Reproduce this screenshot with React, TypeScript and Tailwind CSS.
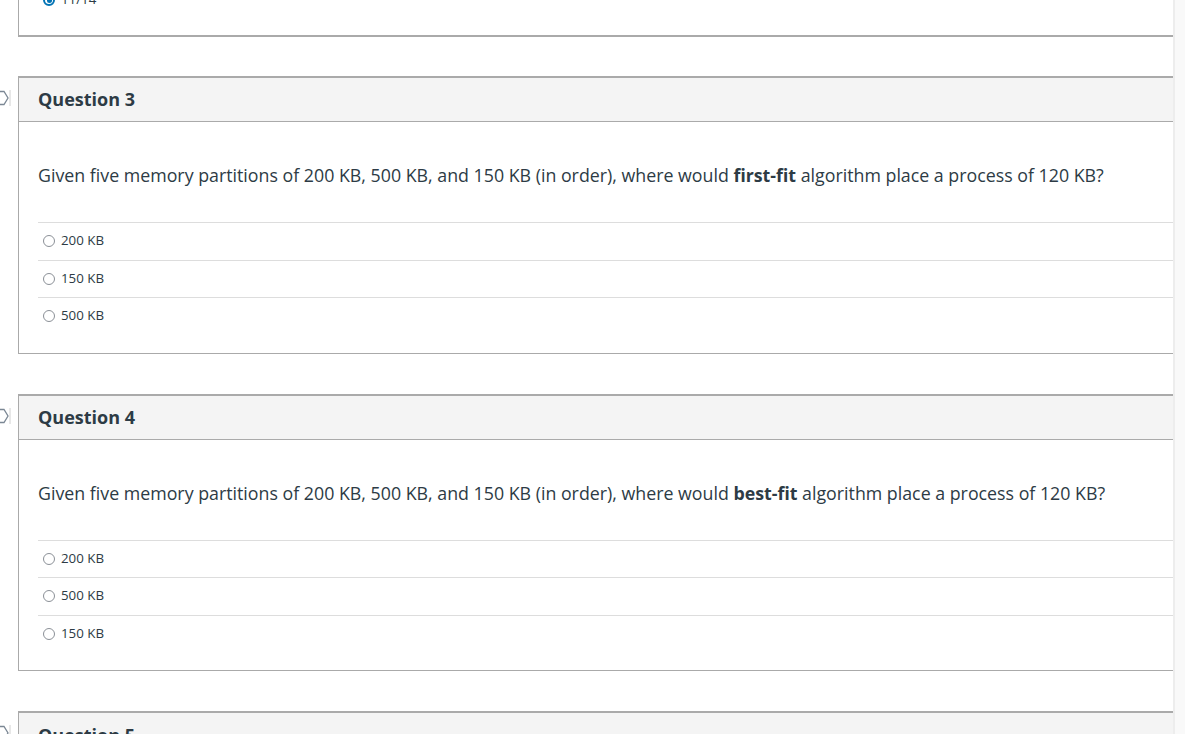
import React from 'react';

type Question = {
  id: number;
  title: string;
  before: string;
  strong: string;
  after: string;
  options: string[];
};

const QUESTIONS: Question[] = [
  {
    id: 3,
    title: 'Question 3',
    before: 'Given five memory partitions of 200 KB, 500 KB, and 150 KB (in order), where would ',
    strong: 'first-fit',
    after: ' algorithm place a process of 120 KB?',
    options: ['200 KB', '150 KB', '500 KB'],
  },
  {
    id: 4,
    title: 'Question 4',
    before: 'Given five memory partitions of 200 KB, 500 KB, and 150 KB (in order), where would ',
    strong: 'best-fit',
    after: ' algorithm place a process of 120 KB?',
    options: ['200 KB', '500 KB', '150 KB'],
  },
];

const FlagMark = () => (
  <svg width="12" height="16" viewBox="0 0 12 16" className="block">
    <path d="M-2 1.5 H4 L8 8 L4 14.5 H-2" fill="none" stroke="#7b8794" strokeWidth="1.3" />
    <line x1="10" y1="0" x2="10" y2="16" stroke="#d0d0d0" strokeWidth="1" />
  </svg>
);

const Radio = ({ checked = false }: { checked?: boolean }) =>
  checked ? (
    <span className="w-[12px] h-[12px] rounded-full border-2 border-[#0374b5] flex items-center justify-center shrink-0">
      <span className="w-[5px] h-[5px] rounded-full bg-[#0374b5]" />
    </span>
  ) : (
    <span className="w-[12px] h-[12px] rounded-full border border-[#8b9097] bg-white shrink-0" />
  );

const QuestionCard = ({ q, first = false }: { q: Question; first?: boolean }) => (
  <div className={`flex ${first ? 'mt-[39px]' : 'mt-[40px]'}`}>
    <div className="w-[18px] shrink-0 pt-[14px] overflow-hidden">
      <FlagMark />
    </div>
    <div className="flex-1 border-l border-t-2 border-b border-[#aaaaaa] bg-white">
      <div className="h-[44px] bg-[#f4f4f4] border-b border-[#aaaaaa] flex items-center pl-[19px]">
        <h2 className="text-[18px] font-bold text-[#2d3b45]">{q.title}</h2>
      </div>
      <div className="pl-[19px] pt-[40px] pb-[18px]">
        <p className="text-[17.8px] leading-[26px] text-[#2d3b45] whitespace-nowrap">
          {q.before}
          <strong className="font-bold">{q.strong}</strong>
          {q.after}
        </p>
        <div className="mt-[34px]">
          {q.options.map(opt => (
            <div key={opt} className="h-[37.5px] border-t-[1.5px] border-[#dddddd] flex items-center pl-[5px] gap-[6px]">
              <Radio />
              <span className="text-[13.3px] text-[#2d3b45]">{opt}</span>
            </div>
          ))}
        </div>
      </div>
    </div>
  </div>
);

export default function App() {
  return (
    <div className="w-[1185px] h-[734px] overflow-hidden bg-white flex" style={{ fontFamily: '"Open Sans", sans-serif' }}>
      <div className="w-[1173px] shrink-0 overflow-hidden">
        <div className="flex">
          <div className="w-[18px] shrink-0" />
          <div className="flex-1 h-[37px] border-l border-b-2 border-[#aaaaaa] overflow-hidden">
            <div className="flex items-center gap-[6px] pl-[24px] mt-[-9px] h-[18px]">
              <Radio checked />
              <span className="text-[13.3px] text-[#2d3b45]">11/14</span>
            </div>
          </div>
        </div>
        {QUESTIONS.map((q, i) => (
          <QuestionCard key={q.id} q={q} first={i === 0} />
        ))}
        <div className="flex mt-[40px]">
          <div className="w-[18px] shrink-0 pt-[14px] overflow-hidden">
            <FlagMark />
          </div>
          <div className="flex-1 border-l border-t-2 border-[#aaaaaa]">
            <div className="h-[44px] bg-[#f4f4f4] flex items-center pl-[19px]">
              <h2 className="text-[18px] font-bold text-[#2d3b45]">Question 5</h2>
            </div>
          </div>
        </div>
      </div>
      <div className="flex-1 bg-[#f9f9f9] border-l-2 border-[#ededed]" />
    </div>
  );
}
